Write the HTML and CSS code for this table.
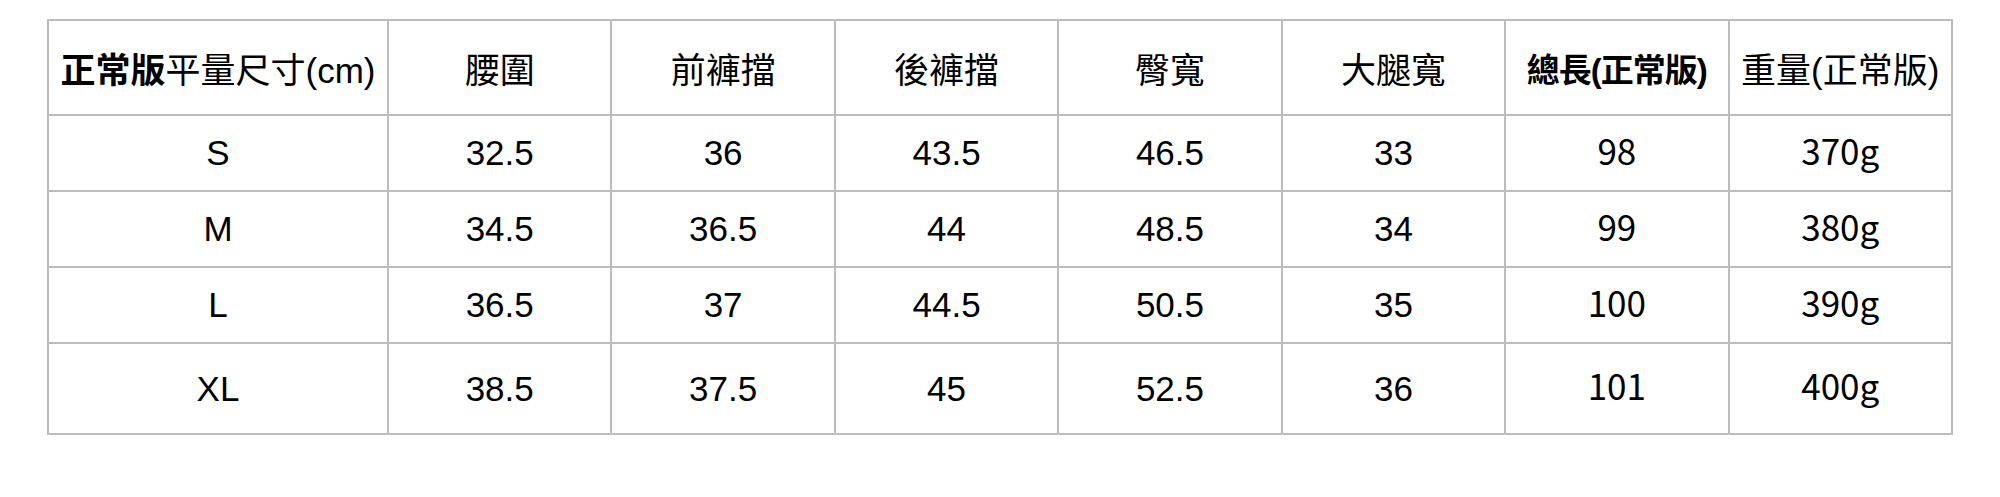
FILE: index.html
```html
<!DOCTYPE html>
<html lang="zh-Hant">
<head>
<meta charset="utf-8">
<title>尺寸表</title>
<link rel="stylesheet" href="styles.css">
</head>
<body>
<table class="size-table">
  <colgroup>
    <col class="c-size">
    <col>
    <col>
    <col>
    <col>
    <col>
    <col>
    <col>
  </colgroup>
  <thead>
    <tr class="head">
      <th><b>正常版</b>平量尺寸(cm)</th>
      <th>腰圍</th>
      <th>前褲擋</th>
      <th>後褲擋</th>
      <th>臀寬</th>
      <th>大腿寬</th>
      <th><b class="tight">總長(正常版)</b></th>
      <th>重量(正常版)</th>
    </tr>
  </thead>
  <tbody>
    <tr class="row">
      <td>S</td><td>32.5</td><td>36</td><td>43.5</td><td>46.5</td><td>33</td><td class="alt">98</td><td class="alt">370g</td>
    </tr>
    <tr class="row">
      <td>M</td><td>34.5</td><td>36.5</td><td>44</td><td>48.5</td><td>34</td><td class="alt">99</td><td class="alt">380g</td>
    </tr>
    <tr class="row">
      <td>L</td><td>36.5</td><td>37</td><td>44.5</td><td>50.5</td><td>35</td><td class="alt">100</td><td class="alt">390g</td>
    </tr>
    <tr class="row last">
      <td>XL</td><td>38.5</td><td>37.5</td><td>45</td><td>52.5</td><td>36</td><td class="alt">101</td><td class="alt">400g</td>
    </tr>
  </tbody>
</table>
</body>
</html>
```
FILE: styles.css
```css
html, body {
  margin: 0;
  background: #ffffff;
}
body {
  padding: 19px 0 0 47px;
  font-family: "Liberation Sans", "Noto Sans CJK TC", sans-serif;
  color: #000000;
}
.size-table {
  border-collapse: collapse;
  table-layout: fixed;
  width: 1906px;
}
.c-size { width: 340px; }
.size-table th,
.size-table td {
  border: 2px solid #bdbdbd;
  padding: 0;
  text-align: center;
  vertical-align: middle;
  font-size: 35px;
  font-weight: 400;
  white-space: nowrap;
}
.size-table b {
  font-weight: 700;
}
.size-table .tight {
  font-size: 33px;
  letter-spacing: -1px;
}
.size-table .alt {
  font-family: "Noto Sans CJK TC", "Noto Sans CJK JP", sans-serif;
  padding-bottom: 8px;
}
.head { height: 95px; }
.row { height: 76px; }
.row.last { height: 91px; }
```
